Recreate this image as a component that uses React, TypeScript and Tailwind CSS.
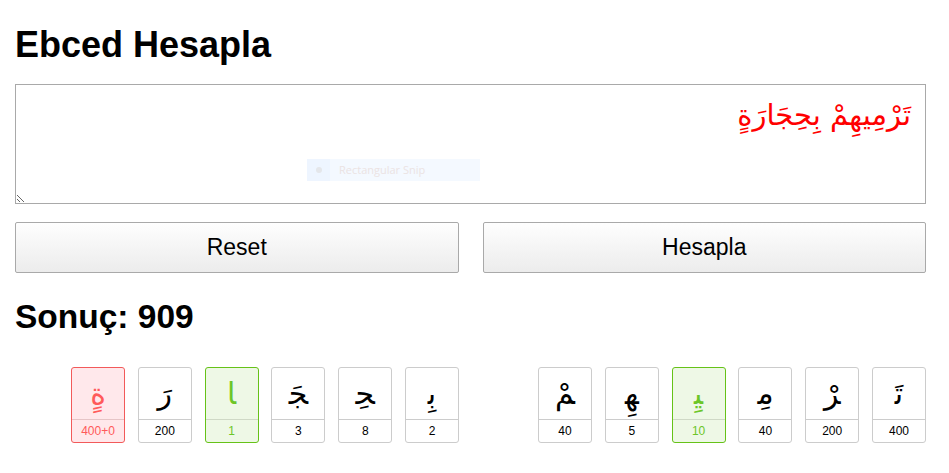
import React from "react";

type Card = { ch: string; val: string; kind?: "red" | "green" };

const ZWJ = "\u200D";

const word1: Card[] = [
  { ch: "تَ" + ZWJ, val: "400" },
  { ch: ZWJ + "رْ", val: "200" },
  { ch: "مِ" + ZWJ, val: "40" },
  { ch: ZWJ + "يِ" + ZWJ, val: "10", kind: "green" },
  { ch: ZWJ + "هِ" + ZWJ, val: "5" },
  { ch: ZWJ + "مْ", val: "40" },
];

const word2: Card[] = [
  { ch: "بِ" + ZWJ, val: "2" },
  { ch: ZWJ + "حِ" + ZWJ, val: "8" },
  { ch: ZWJ + "جَ" + ZWJ, val: "3" },
  { ch: ZWJ + "ا", val: "1", kind: "green" },
  { ch: "رَ", val: "200" },
  { ch: "ةٍ", val: "400+0", kind: "red" },
];

function LetterCard({ c }: { c: Card }) {
  const box =
    c.kind === "red"
      ? "border-[#f25a5a] bg-[#ffe8eb] text-[#ff5a5a]"
      : c.kind === "green"
      ? "border-[#66c218] bg-[#eef8e6] text-[#6cc628]"
      : "border-[#cccccc] bg-white text-black";
  const divider =
    c.kind === "red" ? "border-[#e6c4c6]" : c.kind === "green" ? "border-[#cfd9c6]" : "border-[#cccccc]";
  return (
    <div className={`w-[54px] h-[76px] border rounded-[3px] flex flex-col ${box}`}>
      <div
        className="h-[51px] flex items-center justify-center text-[30px] leading-none"
        style={{ fontFamily: '"DejaVu Sans", sans-serif' }}
      >
        {c.ch}
      </div>
      <div
        className={`flex-1 border-t ${divider} flex items-center justify-center text-[12px] leading-none`}
        style={{ fontFamily: '"Liberation Sans", Arial, sans-serif' }}
        dir="ltr"
      >
        {c.val}
      </div>
    </div>
  );
}

export default function App() {
  return (
    <div
      className="relative w-[949px] h-[473px] bg-white overflow-hidden"
      style={{ fontFamily: '"Liberation Sans", Arial, sans-serif' }}
    >
      <div className="ml-[15px] w-[911px]">
        <h1 className="pt-[24px] text-[36px] leading-[41px] font-bold text-black">Ebced Hesapla</h1>
        <textarea
          dir="rtl"
          readOnly
          value="تَرْمِيهِمْ بِحِجَارَةٍ"
          className="mt-[19px] block w-[911px] h-[120px] border border-[#a9a9a9] px-[14px] py-[12px] text-[29px] leading-[36px] text-[#ff0000] outline-none resize"
          style={{ fontFamily: '"DejaVu Sans", sans-serif' }}
        />
        <div className="mt-[18px] grid grid-cols-2 gap-[24px]">
          <button className="h-[51px] border border-[#a9a9a9] rounded-[2px] bg-gradient-to-b from-[#fefefe] to-[#ececec] text-[23px] text-black">
            Reset
          </button>
          <button className="h-[51px] border border-[#a9a9a9] rounded-[2px] bg-gradient-to-b from-[#fefefe] to-[#ececec] text-[23px] text-black">
            Hesapla
          </button>
        </div>
        <h2 className="mt-[25px] text-[33.5px] leading-[38px] font-bold text-black">Sonuç: 909</h2>
        <div dir="rtl" className="mt-[31px] flex gap-[79px]">
          <div className="flex gap-[12.8px]">
            {word1.map((c, i) => (
              <LetterCard key={i} c={c} />
            ))}
          </div>
          <div className="flex gap-[12.8px]">
            {word2.map((c, i) => (
              <LetterCard key={i} c={c} />
            ))}
          </div>
        </div>
      </div>
      <div className="absolute left-[307px] top-[159px] w-[173px] h-[22px] bg-[#f4f9ff] flex items-center">
        <div className="w-[23px] h-full bg-[#eef5ff] flex items-center justify-center">
          <div className="w-[6px] h-[6px] rounded-full bg-[#e4e6ea]" />
        </div>
        <span className="ml-[9px] text-[11px] text-[#ebe3e3]" style={{ fontFamily: '"Open Sans", sans-serif' }}>
          Rectangular Snip
        </span>
      </div>
    </div>
  );
}
